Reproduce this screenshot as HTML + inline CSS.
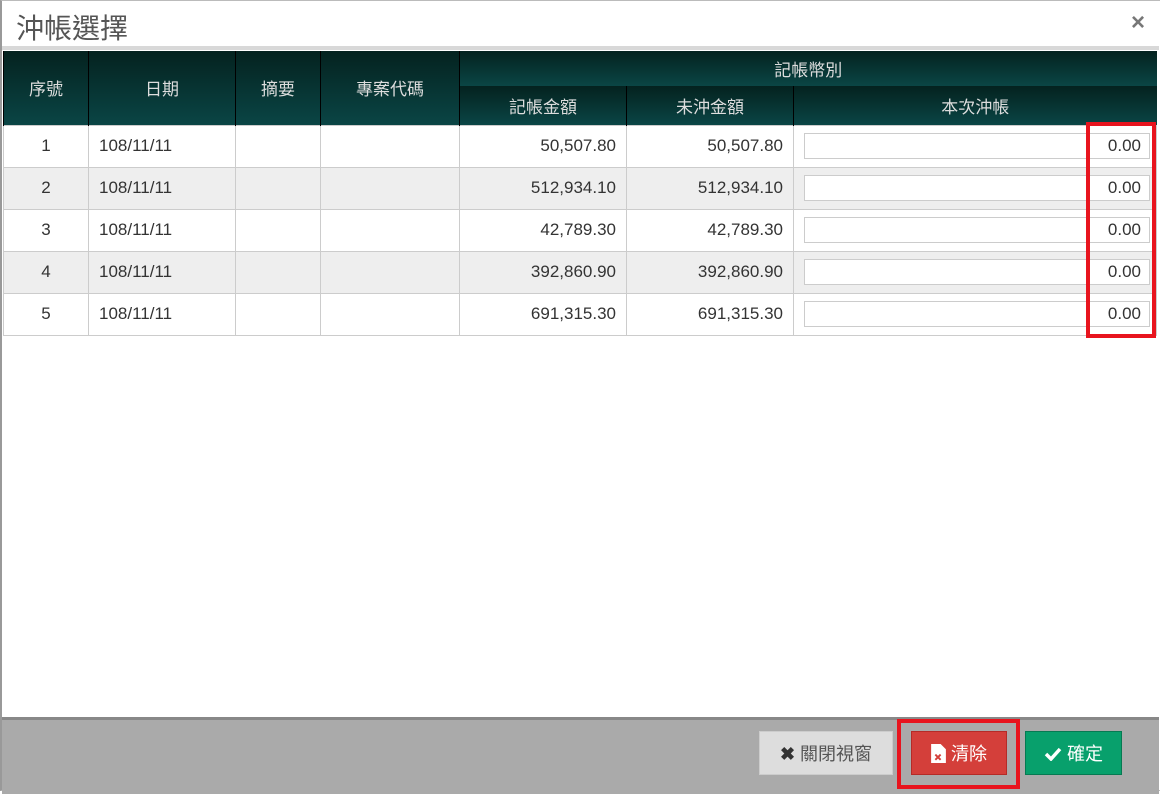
<!DOCTYPE html>
<html><head><meta charset="utf-8"><style>
body{margin:0;width:1160px;height:791px;overflow:hidden;background:#fff;font-family:"Liberation Sans","Noto Sans CJK TC",sans-serif;position:relative}
.frame{position:absolute;left:0;top:0;width:1158px;height:789px;border:1px solid #bbb;border-left:2px solid #999}
.title{position:absolute;left:16px;top:7px;font-size:28px;color:#555}
.close{position:absolute;left:1131px;top:9px;font-size:24px;color:#777;font-weight:bold}
.sep{position:absolute;left:2px;top:46px;width:1157px;height:4px;background:#d8d8d8}
table{position:absolute;left:3px;top:51px;border-collapse:collapse;width:1154px;table-layout:fixed}
th{background:linear-gradient(#04221f,#0a4545);color:#ddd;font-weight:normal;font-size:17px;border-left:1px solid #000;padding:0}
td{font-size:17px;color:#333;border:1px solid #ccc;height:41px;padding:0 10px}
tr.e td{background:#eee}
.r{text-align:right}.c{text-align:center}
.inp{height:24px;border:1px solid #ccc;background:#fff;text-align:right;line-height:24px;padding-right:8px;margin-right:-4px}
.foot{position:absolute;left:2px;top:717px;width:1157px;height:74px;background:#aaa;border-top:3px solid #888}
.btn{position:absolute;top:731px;height:44px;font-size:18px;line-height:44px;text-align:center;box-sizing:border-box}
.hl{position:absolute;border:4px solid #e8141e;box-sizing:border-box}
</style></head><body>
<div class="frame"></div>
<div class="title">沖帳選擇</div><div class="close">×</div>
<div class="sep"></div>
<table>
<colgroup><col style="width:85px"><col style="width:147px"><col style="width:85px"><col style="width:139px"><col style="width:167px"><col style="width:167px"><col></colgroup>
<tr style="height:35px"><th rowspan="2">序號</th><th rowspan="2">日期</th><th rowspan="2">摘要</th><th rowspan="2">專案代碼</th><th colspan="3">記帳幣別</th></tr>
<tr style="height:39px"><th>記帳金額</th><th>未沖金額</th><th>本次沖帳</th></tr>
<tr><td class="c">1</td><td>108/11/11</td><td></td><td></td><td class="r">50,507.80</td><td class="r">50,507.80</td><td><div class="inp">0.00</div></td></tr>
<tr class="e"><td class="c">2</td><td>108/11/11</td><td></td><td></td><td class="r">512,934.10</td><td class="r">512,934.10</td><td><div class="inp">0.00</div></td></tr>
<tr><td class="c">3</td><td>108/11/11</td><td></td><td></td><td class="r">42,789.30</td><td class="r">42,789.30</td><td><div class="inp">0.00</div></td></tr>
<tr class="e"><td class="c">4</td><td>108/11/11</td><td></td><td></td><td class="r">392,860.90</td><td class="r">392,860.90</td><td><div class="inp">0.00</div></td></tr>
<tr><td class="c">5</td><td>108/11/11</td><td></td><td></td><td class="r">691,315.30</td><td class="r">691,315.30</td><td><div class="inp">0.00</div></td></tr>
</table>
<div class="hl" style="left:1086px;top:122px;width:70px;height:216px"></div>
<div class="foot"></div>
<div class="btn" style="left:759px;width:134px;background:#ddd;border:1px solid #ccc;color:#555"><b style="color:#333">✖</b> 關閉視窗</div>
<div class="btn" style="left:911px;width:96px;background:#d43f3a;border:1px solid #b52b27;color:#fff"><svg width="15" height="19" viewBox="0 0 14 18" style="vertical-align:-3px"><path d="M0 0h9l5 5v13H0z" fill="#fff"/><path d="M4 10l5 5M9 10l-5 5" stroke="#d43f3a" stroke-width="1.8"/></svg> 清除</div>
<div class="btn" style="left:1025px;width:97px;background:#08a06c;border:1px solid #067a52;color:#fff"><svg width="18" height="14" viewBox="0 0 18 14" style="vertical-align:-1px"><path d="M2 7l5 5 9-10" stroke="#fff" stroke-width="3.5" fill="none"/></svg> 確定</div>
<div class="hl" style="left:897px;top:719px;width:123px;height:70px"></div>
</body></html>
